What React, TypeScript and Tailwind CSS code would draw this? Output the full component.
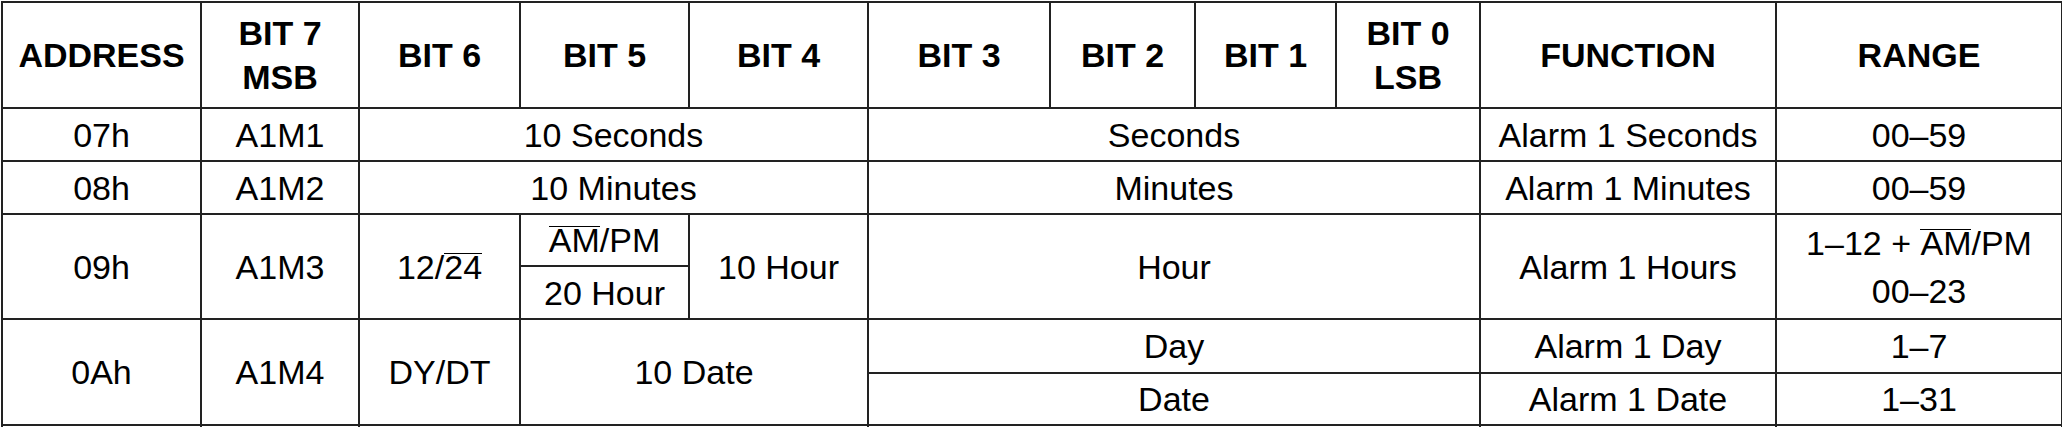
const td = "border-2 border-[#222] text-center align-middle p-0 whitespace-nowrap";
const th = "border-2 border-[#222] text-center align-middle p-0 font-bold leading-[44px] whitespace-nowrap";

const Bar = ({ children }: { children: React.ReactNode }) => (
  <span className="inline-block border-t-[1.5px] border-black leading-[0.8]">{children}</span>
);

export default function App() {
  return (
    <div className="bg-white w-[2062px] h-[427px] overflow-hidden text-black" style={{ fontFamily: '"Liberation Sans", Arial, sans-serif' }}>
      <table className="border-collapse table-fixed w-[2060px] text-[34px] leading-none ml-px mt-px">
        <colgroup>
          <col className="w-[199px]" />
          <col className="w-[158px]" />
          <col className="w-[161px]" />
          <col className="w-[169px]" />
          <col className="w-[179px]" />
          <col className="w-[182px]" />
          <col className="w-[145px]" />
          <col className="w-[141px]" />
          <col className="w-[144px]" />
          <col className="w-[296px]" />
          <col className="w-[286px]" />
        </colgroup>
        <thead>
          <tr className="h-[106px]">
            <th className={th}>ADDRESS</th>
            <th className={th}>BIT 7<br />MSB</th>
            <th className={th}>BIT 6</th>
            <th className={th}>BIT 5</th>
            <th className={th}>BIT 4</th>
            <th className={th}>BIT 3</th>
            <th className={th}>BIT 2</th>
            <th className={th}>BIT 1</th>
            <th className={th}>BIT 0<br />LSB</th>
            <th className={th}>FUNCTION</th>
            <th className={th}>RANGE</th>
          </tr>
        </thead>
        <tbody>
          <tr className="h-[53px]">
            <td className={td}>07h</td>
            <td className={td}>A1M1</td>
            <td className={td} colSpan={3}>10 Seconds</td>
            <td className={td} colSpan={4}>Seconds</td>
            <td className={td}>Alarm 1 Seconds</td>
            <td className={td}>00–59</td>
          </tr>
          <tr className="h-[53px]">
            <td className={td}>08h</td>
            <td className={td}>A1M2</td>
            <td className={td} colSpan={3}>10 Minutes</td>
            <td className={td} colSpan={4}>Minutes</td>
            <td className={td}>Alarm 1 Minutes</td>
            <td className={td}>00–59</td>
          </tr>
          <tr className="h-[52px]">
            <td className={td} rowSpan={2}>09h</td>
            <td className={td} rowSpan={2}>A1M3</td>
            <td className={td} rowSpan={2}>12/<Bar>24</Bar></td>
            <td className={td}><Bar>AM</Bar>/PM</td>
            <td className={td} rowSpan={2}>10 Hour</td>
            <td className={td} colSpan={4} rowSpan={2}>Hour</td>
            <td className={td} rowSpan={2}>Alarm 1 Hours</td>
            <td className={`${td} leading-[48px]`} rowSpan={2}>1–12 + <Bar>AM</Bar>/PM<br />00–23</td>
          </tr>
          <tr className="h-[53px]">
            <td className={td}>20 Hour</td>
          </tr>
          <tr className="h-[54px]">
            <td className={td} rowSpan={2}>0Ah</td>
            <td className={td} rowSpan={2}>A1M4</td>
            <td className={td} rowSpan={2}>DY/DT</td>
            <td className={td} colSpan={2} rowSpan={2}>10 Date</td>
            <td className={td} colSpan={4}>Day</td>
            <td className={td}>Alarm 1 Day</td>
            <td className={td}>1–7</td>
          </tr>
          <tr className="h-[52px]">
            <td className={td} colSpan={4}>Date</td>
            <td className={td}>Alarm 1 Date</td>
            <td className={td}>1–31</td>
          </tr>
          <tr className="h-[40px]">
            <td className={td}></td>
            <td className={td}></td>
            <td className={td} colSpan={3}></td>
            <td className={td} colSpan={4}></td>
            <td className={td}></td>
            <td className={td}></td>
          </tr>
        </tbody>
      </table>
    </div>
  );
}
